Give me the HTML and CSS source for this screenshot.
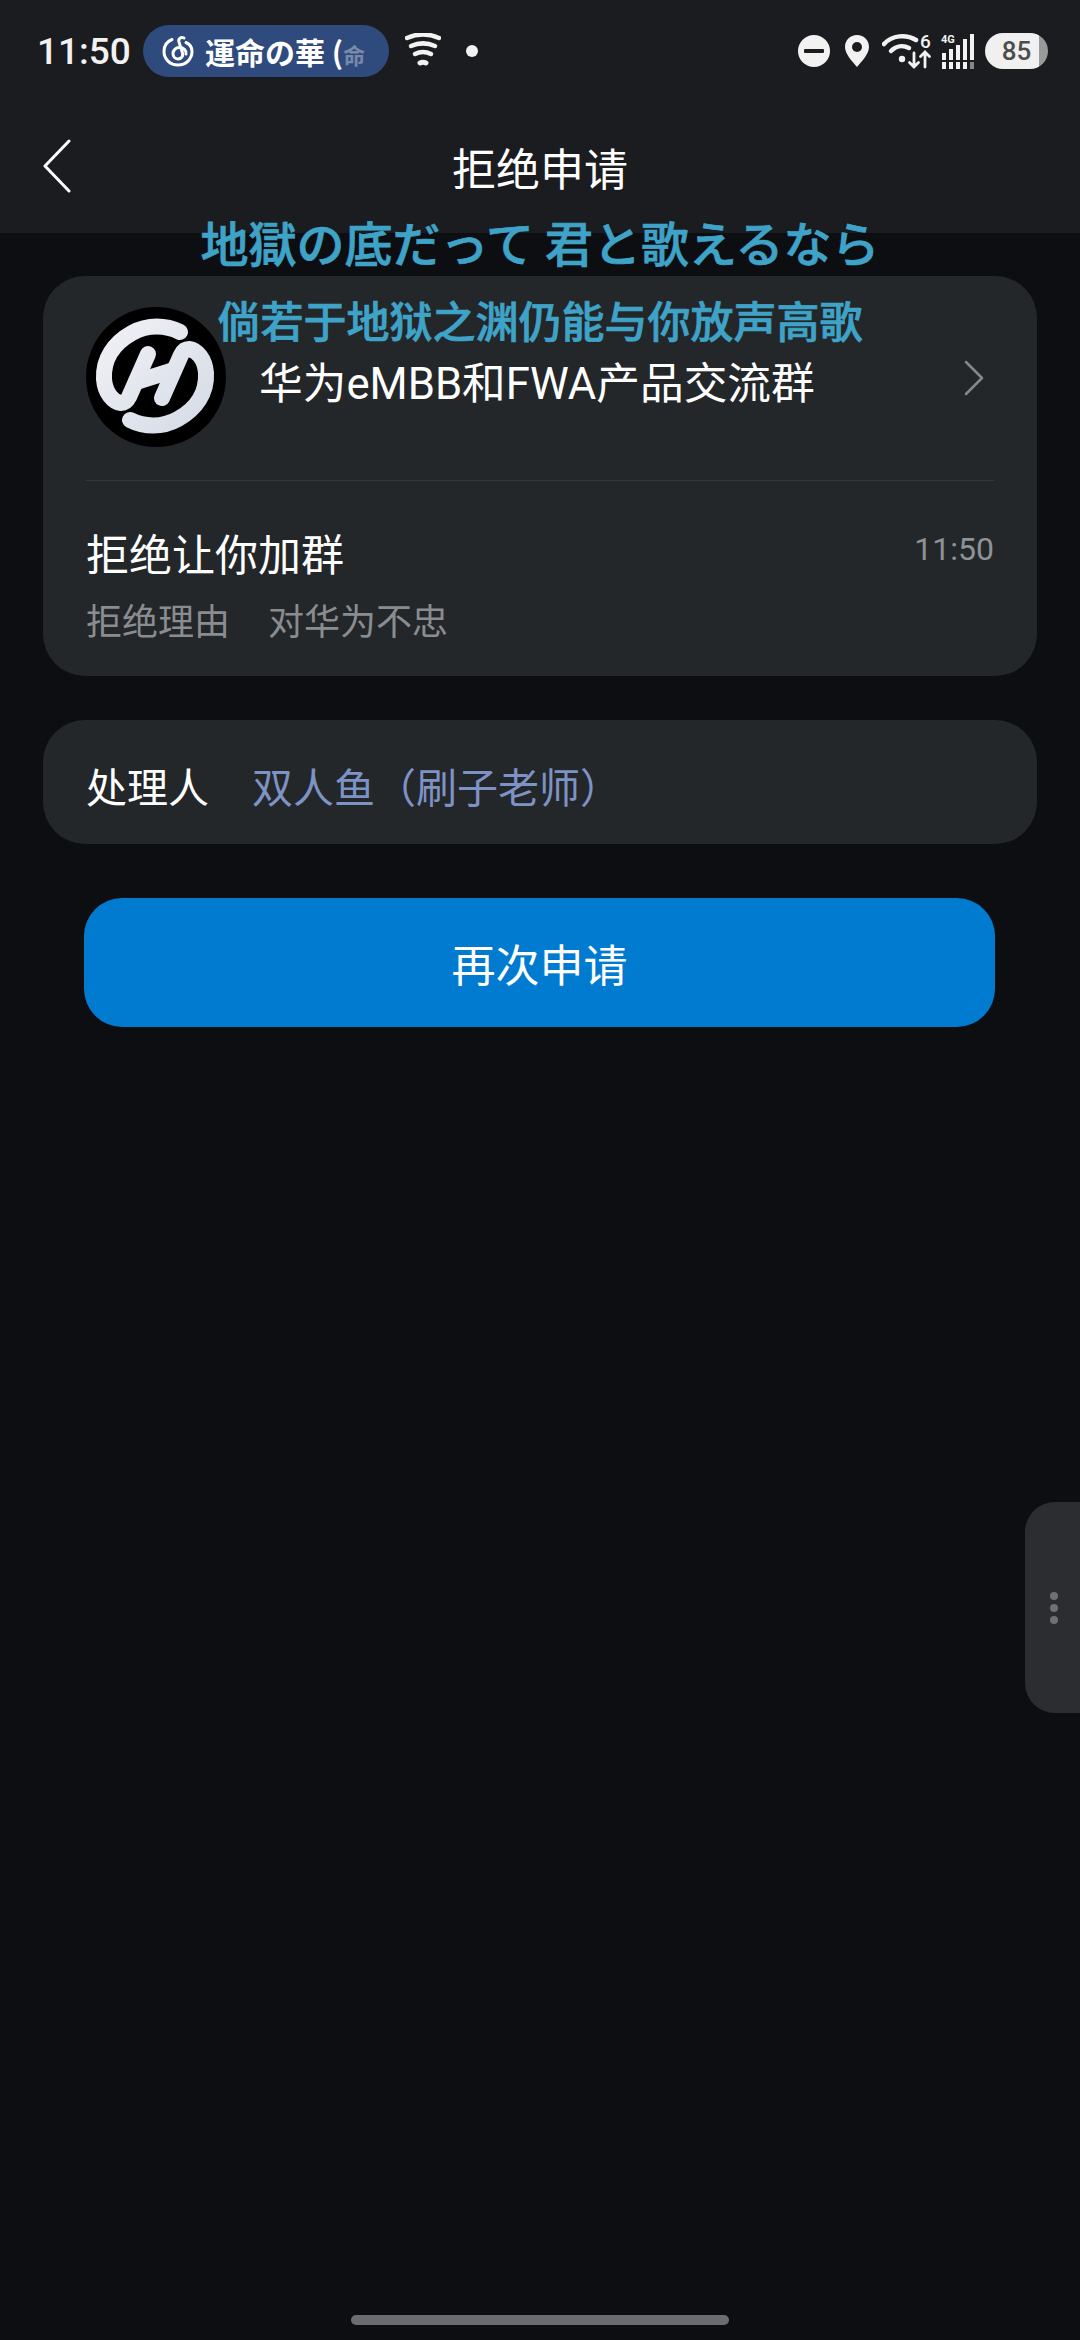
FILE: index.html
```html
<!DOCTYPE html>
<html lang="zh-CN">
<head>
  <meta charset="UTF-8">
  <meta name="viewport" content="width=device-width, initial-scale=1.0">
  <title>拒绝申请</title>
  <link rel="stylesheet" href="styles.css">
</head>
<body>
  <div class="page">
    <!-- Status bar + title bar -->
    <header class="top">
      <div class="status">
        <div class="status-left">
          <span class="clock">11:50</span>
          <div class="music">
            <svg class="music-icon" width="32" height="32" viewBox="0 0 32 32" fill="none" stroke="#fff" stroke-width="3" stroke-linecap="round">
              <path d="M10 4.500C5 6.500 2 11 2 16.500 2 24 8 30 16 30s14-6 14-13.500C30 12 27.500 9 24 7.500"/>
              <path d="M22 3c-3-1.500-6 .5-5 4l3.500 11c1 3.500-1.500 6-4.500 6s-5-2.500-5-5.500 2.500-6 6.500-6c4.500 0 7 3 6.500 6.500"/>
            </svg>
            <span class="music-text">運命の華 (<span class="music-fade">命</span></span>
          </div>
          <svg class="wifi-small" width="36" height="36" viewBox="0 0 36 36" fill="none" stroke="#f2f2f2" stroke-linecap="round">
            <path stroke-width="4.500" d="M2 5c10-4.500 22-4.500 32 0"/>
            <path stroke-width="4.500" d="M6 13c8-3.500 16-3.500 24 0"/>
            <path stroke-width="4.500" d="M10 21c5-2.500 11-2.500 16 0"/>
            <path stroke-width="5" d="M15 30c2-1 4-1 6 0"/>
          </svg>
          <span class="dot"></span>
        </div>
        <div class="status-right">
          <svg class="minus" width="32" height="32" viewBox="0 0 32 32"><circle cx="16" cy="16" r="16" fill="#f2f2f2"/><rect x="6" y="14" width="20" height="4" rx="1" fill="#1a1c1f"/></svg>
          <svg class="pin" width="24" height="32" viewBox="0 0 24 32"><path d="M12 0C5 0 0 5 0 12c0 7 7 14 12 20 5-6 12-13 12-20C24 5 19 0 12 0z" fill="#f2f2f2"/><circle cx="12" cy="12" r="5" fill="#1a1c1f"/></svg>
          <svg class="wifi6" width="50" height="44" viewBox="0 -4 50 44" fill="none" stroke="#f2f2f2" stroke-linecap="round">
            <path stroke-width="4.500" d="M2 11C10 2 24 1 34 7"/>
            <path stroke-width="4.500" d="M9 18c5-5 12-6 18-3"/>
            <circle cx="20" cy="26" r="3.200" fill="#f2f2f2" stroke="none"/>
            <path stroke-width="2.800" d="M32 20v14m-4.500-4.500L32 34l4.500-4.500M43 34V19m-4.500 4.500L43 19l4.500 4.500"/>
            <text class="wifi-six" x="38" y="15" fill="#f2f2f2" stroke="none">6</text>
          </svg>
          <svg class="signal" width="34" height="36" viewBox="0 0 34 36">
            <text class="four-g" x="0" y="10" fill="#f2f2f2">4G</text>
            <g fill="#f2f2f2">
              <rect x="1" y="20" width="4" height="7"/><rect x="8" y="16" width="4" height="11"/>
              <rect x="15" y="12" width="4" height="15"/><rect x="22" y="6" width="4" height="21"/>
              <rect x="29" y="1" width="4" height="26"/>
              <rect x="1" y="29" width="4" height="7"/><rect x="8" y="29" width="4" height="7"/>
              <rect x="15" y="29" width="4" height="7"/><rect x="22" y="29" width="4" height="7"/>
              <rect x="29" y="29" width="4" height="7" opacity=".5"/>
            </g>
          </svg>
          <div class="battery"><span>85</span></div>
        </div>
      </div>
      <div class="nav">
        <svg class="back" width="28" height="54" viewBox="0 0 28 54" fill="none" stroke="#fff" stroke-width="3" stroke-linecap="round" stroke-linejoin="round">
          <path d="M26 2 2 27l24 25"/>
        </svg>
        <h1 class="title">拒绝申请</h1>
        <span></span>
      </div>
    </header>

    <main class="content">
      <!-- Group + rejection card -->
      <section class="card">
        <div class="group-row">
          <svg class="avatar" width="140" height="140" viewBox="0 0 140 140" fill="none" stroke-linecap="round" stroke-linejoin="round">
            <defs>
              <linearGradient id="silver" gradientUnits="userSpaceOnUse" x1="20" y1="20" x2="120" y2="120">
                <stop offset="0" stop-color="#f0f1f5"/>
                <stop offset="1" stop-color="#d5dbe6"/>
              </linearGradient>
            </defs>
            <circle cx="70" cy="70" r="70" fill="#000"/>
            <g stroke="url(#silver)" stroke-width="16">
              <path d="M94 25C80 18 62 17 46 26 28 36 17 52 18 72 19 86 27 95 35 96 39 96 41 94 43 90L62 47"/>
              <path d="M44 113C58 120 76 121 92 112 110 102 121 86 120 66 119 52 111 43 103 42 99 42 97 44 95 48L76 91"/>
              <path d="M50 75 88 63"/>
            </g>
          </svg>
          <span class="group-name">华为eMBB和FWA产品交流群</span>
          <svg class="arrow" width="20" height="36" viewBox="0 0 20 36" fill="none" stroke="#85888c" stroke-width="2.500" stroke-linecap="round" stroke-linejoin="round">
            <path d="M2 2l16 16L2 34"/>
          </svg>
        </div>
        <div class="detail">
          <div class="detail-head">
            <span class="detail-title">拒绝让你加群</span>
            <span class="detail-time">11:50</span>
          </div>
          <div class="reason">
            <span>拒绝理由</span>
            <span>对华为不忠</span>
          </div>
        </div>
      </section>

      <!-- Handler -->
      <section class="card handler">
        <span class="handler-label">处理人</span>
        <span class="handler-name">双人鱼（刷子老师）</span>
      </section>

      <button class="btn-apply" type="button">再次申请</button>
    </main>

    <div class="home-bar"></div>

    <!-- Floating lyrics, over the page -->
    <div class="lyrics">
      <p class="lyric-jp" lang="ja">地獄の底だって 君と歌えるなら</p>
      <p class="lyric-cn">倘若于地狱之渊仍能与你放声高歌</p>
    </div>

    <!-- Side handle -->
    <div class="side-tab">
      <i></i><i></i><i></i>
    </div>
  </div>
</body>
</html>
```

FILE: styles.css
```css
/* General Styles */
* {
  box-sizing: border-box;
}

body {
  margin: 0;
  padding: 0;
  background-color: #0d0e12;
  font-family: Roboto, "Noto Sans CJK SC", sans-serif;
  color: #fff;
}

.page {
  position: relative;
  width: 1080px;
  height: 2340px;
  display: flex;
  flex-direction: column;
  overflow: hidden;
}

/* Status bar */
.top {
  height: 233px;
  background-color: #1a1c1f;
}

.status {
  height: 100px;
  padding: 25px 32px 0 37px;
  display: flex;
  justify-content: space-between;
}

.status-left,
.status-right {
  height: 52px;
  display: flex;
  align-items: center;
}

.clock {
  font-size: 37px;
  font-weight: 500;
  color: #f2f2f2;
  width: 106px;
}

.music {
  width: 246px;
  height: 52px;
  padding-left: 19px;
  border-radius: 26px;
  background-color: #2f4a7c;
  display: flex;
  align-items: center;
  gap: 11px;
}

.music-text {
  font-family: "Noto Sans CJK JP", sans-serif;
  font-size: 30px;
  font-weight: 700;
  white-space: nowrap;
}

.music-fade {
  opacity: 0.35;
  font-size: 22px;
}

.wifi-small {
  margin-left: 16px;
}

.dot {
  width: 12px;
  height: 12px;
  margin-left: 25px;
  border-radius: 50%;
  background-color: #f2f2f2;
}

.status-right {
  gap: 9px;
}

.minus {
  margin-right: 6px;
}

.pin {
  margin-right: 4px;
}

.wifi-six {
  font-family: Roboto, sans-serif;
  font-size: 19px;
  font-weight: 500;
}

.four-g {
  font-family: Roboto, sans-serif;
  font-size: 11px;
  font-weight: 700;
}

.battery {
  width: 63px;
  height: 36px;
  margin-left: 1px;
  border-radius: 18px;
  background: linear-gradient(90deg, #f0f0f0 85%, #9a9a9a 85%);
  display: flex;
  align-items: center;
  justify-content: center;
}

.battery span {
  font-size: 26px;
  font-weight: 500;
  color: #4d4d4d;
}

/* Title bar */
.nav {
  height: 133px;
  padding: 0 43px 2px;
  display: grid;
  grid-template-columns: 1fr auto 1fr;
  align-items: center;
}

.title {
  margin: 2px 0 0 0;
  font-size: 44px;
  font-weight: 400;
  line-height: 1;
  font-family: "Noto Sans CJK SC", sans-serif;
}

/* Cards */
.content {
  flex: 1;
  padding: 43px 43px 0;
}

.card {
  background-color: #24272a;
  border-radius: 42px;
}

.group-row {
  height: 205px;
  margin: 0 43px;
  padding-bottom: 2px;
  border-bottom: 1px solid #34373a;
  display: flex;
  align-items: center;
}

.avatar {
  flex: none;
}

.group-name {
  margin: 6px 0 0 33px;
  flex: 1;
  font-size: 43.7px;
  color: #fff;
  white-space: nowrap;
}

.arrow {
  margin: 2px 10px 0 0;
}

.detail {
  height: 195px;
  padding: 45px 43px 0;
}

.detail-head {
  display: flex;
  justify-content: space-between;
  align-items: flex-start;
  height: 52px;
}

.detail-title {
  font-size: 43px;
  line-height: 52px;
  font-family: "Noto Sans CJK SC", sans-serif;
}

.detail-time {
  font-size: 32px;
  line-height: 46px;
  color: #8f9296;
}

.reason {
  margin-top: 21px;
  display: flex;
  gap: 38px;
  font-size: 36px;
  line-height: 48px;
  color: #8a8d90;
}

.handler {
  height: 124px;
  margin-top: 44px;
  padding: 5px 43px 0;
  display: flex;
  align-items: center;
  gap: 43px;
  font-size: 41px;
}

.handler-name {
  color: #7d93c5;
}

.btn-apply {
  display: block;
  width: 911px;
  height: 129px;
  margin: 54px 0 0 41px;
  border: 0;
  border-radius: 38px;
  background-color: #017bd0;
  color: #fff;
  font-family: "Noto Sans CJK SC", sans-serif;
  font-size: 44px;
}

.home-bar {
  width: 378px;
  height: 10px;
  margin: 0 auto 15px;
  border-radius: 5px;
  background-color: #6b6c70;
}

/* Overlays */
.lyrics {
  position: absolute;
  top: 211px;
  left: 0;
  width: 100%;
  display: flex;
  flex-direction: column;
  gap: 19px;
  text-align: center;
  font-family: "Noto Sans CJK SC", sans-serif;
  font-weight: 500;
  color: #3fa3c8;
  -webkit-text-stroke: 0.7px #3fa3c8;
}

.lyrics p {
  margin: 0;
}

.lyric-jp {
  font-family: "Noto Sans CJK JP", sans-serif;
  font-size: 48px;
  line-height: 60px;
}

.lyric-cn {
  font-size: 43px;
  line-height: 58px;
}

.side-tab {
  position: absolute;
  top: 1502px;
  right: 0;
  width: 55px;
  height: 211px;
  padding-left: 25px;
  border-radius: 30px 0 0 30px;
  background-color: #2c2d31;
  display: flex;
  flex-direction: column;
  justify-content: center;
  gap: 4px;
}

.side-tab i {
  display: block;
  width: 8px;
  height: 8px;
  border-radius: 50%;
  background-color: #6f7074;
}
```
